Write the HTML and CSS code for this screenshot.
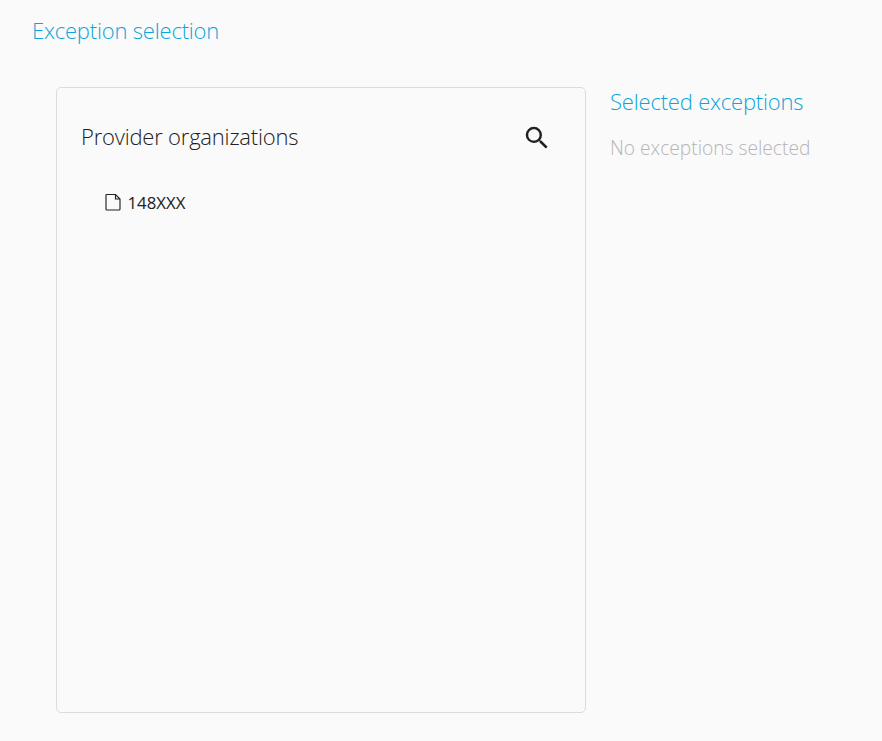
FILE: index.html
```html
<!DOCTYPE html>
<html lang="en">
<head>
<meta charset="utf-8">
<title>Exception selection</title>
<link rel="stylesheet" href="styles.css">
</head>
<body>
<main class="page">
  <h1 class="title">Exception selection</h1>
  <div class="columns">
    <section class="panel">
      <header class="panel-header">
        <h2 class="panel-title">Provider organizations</h2>
        <svg class="search" viewBox="0 0 24 24"><path d="M15.5 14h-.79l-.28-.27A6.47 6.47 0 0 0 16 9.5 6.5 6.5 0 1 0 9.5 16c1.61 0 3.09-.59 4.23-1.57l.27.28v.79l5 4.99L20.49 19l-4.99-5zm-6 0C7.01 14 5 11.99 5 9.5S7.01 5 9.5 5 14 7.01 14 9.5 11.99 14 9.5 14z"/></svg>
      </header>
      <div class="item">
        <svg class="file" viewBox="0 0 16 18"><path d="M1.5 1.5h9l4.5 4.5v10a1 1 0 0 1-1 1H2a1 1 0 0 1-1-1V2a.5.5 0 0 1 .5-.5zM10.5 1.5V6H15"/></svg>
        <span>148XXX</span>
      </div>
    </section>
    <aside class="selected">
      <h2 class="selected-title">Selected exceptions</h2>
      <p class="empty">No exceptions selected</p>
    </aside>
  </div>
</main>
</body>
</html>
```
FILE: styles.css
```css
* { box-sizing: border-box; }
body { margin: 0; background: #fafafa; color: #212121; font-family: "Open Sans", sans-serif; }
h1, h2, p { margin: 0; font-weight: 300; }
.page { height: 741px; padding: 14px 32px 28px; }
.title { font-size: 22px; line-height: 32px; letter-spacing: -0.19px; color: #0ba5d8; }
.columns { display: flex; gap: 24px; padding: 41px 0 0 24px; }
.panel { width: 530px; height: 626px; border: 1px solid #dcdcdc; border-radius: 5px; padding: 32px 33px 0 24px; }
.panel-header { display: flex; justify-content: space-between; align-items: center; height: 32px; }
.panel-title { font-size: 22px; line-height: 32px; letter-spacing: -0.2px; }
.search { width: 30px; height: 30px; margin-top: 4px; fill: #212121; }
.item { display: flex; align-items: center; gap: 6.5px; height: 24px; margin: 38px 0 0 24px; font-size: 16.8px; }
.file { width: 16px; height: 18px; fill: none; stroke: #212121; stroke-width: 1.15; }
.selected-title { margin-top: -1px; font-size: 22px; line-height: 30px; letter-spacing: -0.19px; color: #0ba5d8; }
.empty { margin-top: 18px; font-size: 19.2px; line-height: 28px; color: #b5b5b5; }
```
